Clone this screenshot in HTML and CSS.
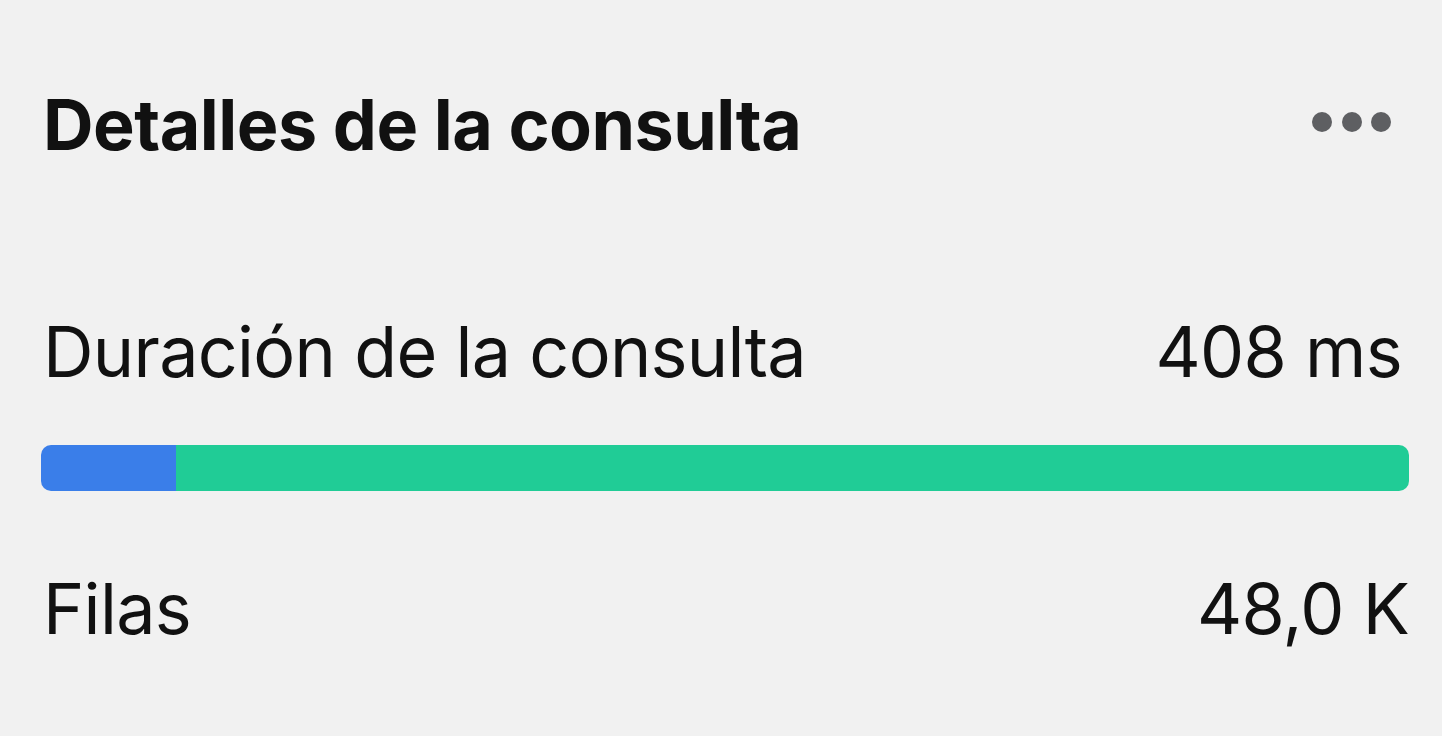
FILE: index.html
```html
<!DOCTYPE html>
<html lang="es">
<head>
<meta charset="utf-8">
<title>Detalles de la consulta</title>
<link rel="stylesheet" href="styles.css">
</head>
<body>
<div class="card">
  <div class="header">
    <h1 class="title">Detalles de la consulta</h1>
    <div class="more" aria-label="Más opciones">
      <span class="dot"></span><span class="dot"></span><span class="dot"></span>
    </div>
  </div>
  <div class="row row-duration">
    <span class="label">Duración de la consulta</span>
    <span class="value">408 ms</span>
  </div>
  <div class="bar">
    <div class="seg seg-blue" style="width:9.9%"></div>
    <div class="seg seg-green"></div>
  </div>
  <div class="row row-rows">
    <span class="label">Filas</span>
    <span class="value">48,0 K</span>
  </div>
</div>
</body>
</html>
```

FILE: styles.css
```css
html, body {
  margin: 0;
  padding: 0;
  background: #f1f1f1;
}
body {
  font-family: Inter, "Noto Sans", "Liberation Sans", sans-serif;
  color: #111;
  width: 1442px;
  height: 736px;
  overflow: hidden;
}
.card {
  padding: 90px 33px 0 41px;
  display: flex;
  flex-direction: column;
}
.header {
  display: flex;
  justify-content: space-between;
  align-items: flex-start;
}
.title {
  margin: 0 0 0 2px;
  font-size: 70px;
  font-weight: 700;
  letter-spacing: -0.5px;
  line-height: 1;
}
.more {
  display: flex;
  gap: 9.5px;
  margin-right: 18px;
  margin-top: 22px;
}
.dot {
  width: 20px;
  height: 20px;
  border-radius: 50%;
  background: #5e5f62;
}
.row {
  display: flex;
  justify-content: space-between;
  align-items: baseline;
  font-size: 70px;
  line-height: 1;
  letter-spacing: -0.7px;
  padding-left: 2px;
}
.row-duration {
  margin-top: 157px;
}
.row-duration .value {
  margin-right: 7px;
}
.label, .value {
  font-weight: 400;
}
.bar {
  display: flex;
  height: 46px;
  border-radius: 10px;
  overflow: hidden;
  margin-top: 58px;
}
.seg-blue {
  background: #3a7ee9;
}
.seg-green {
  flex: 1;
  background: #20cc96;
}
.row-rows {
  margin-top: 83px;
}
```
